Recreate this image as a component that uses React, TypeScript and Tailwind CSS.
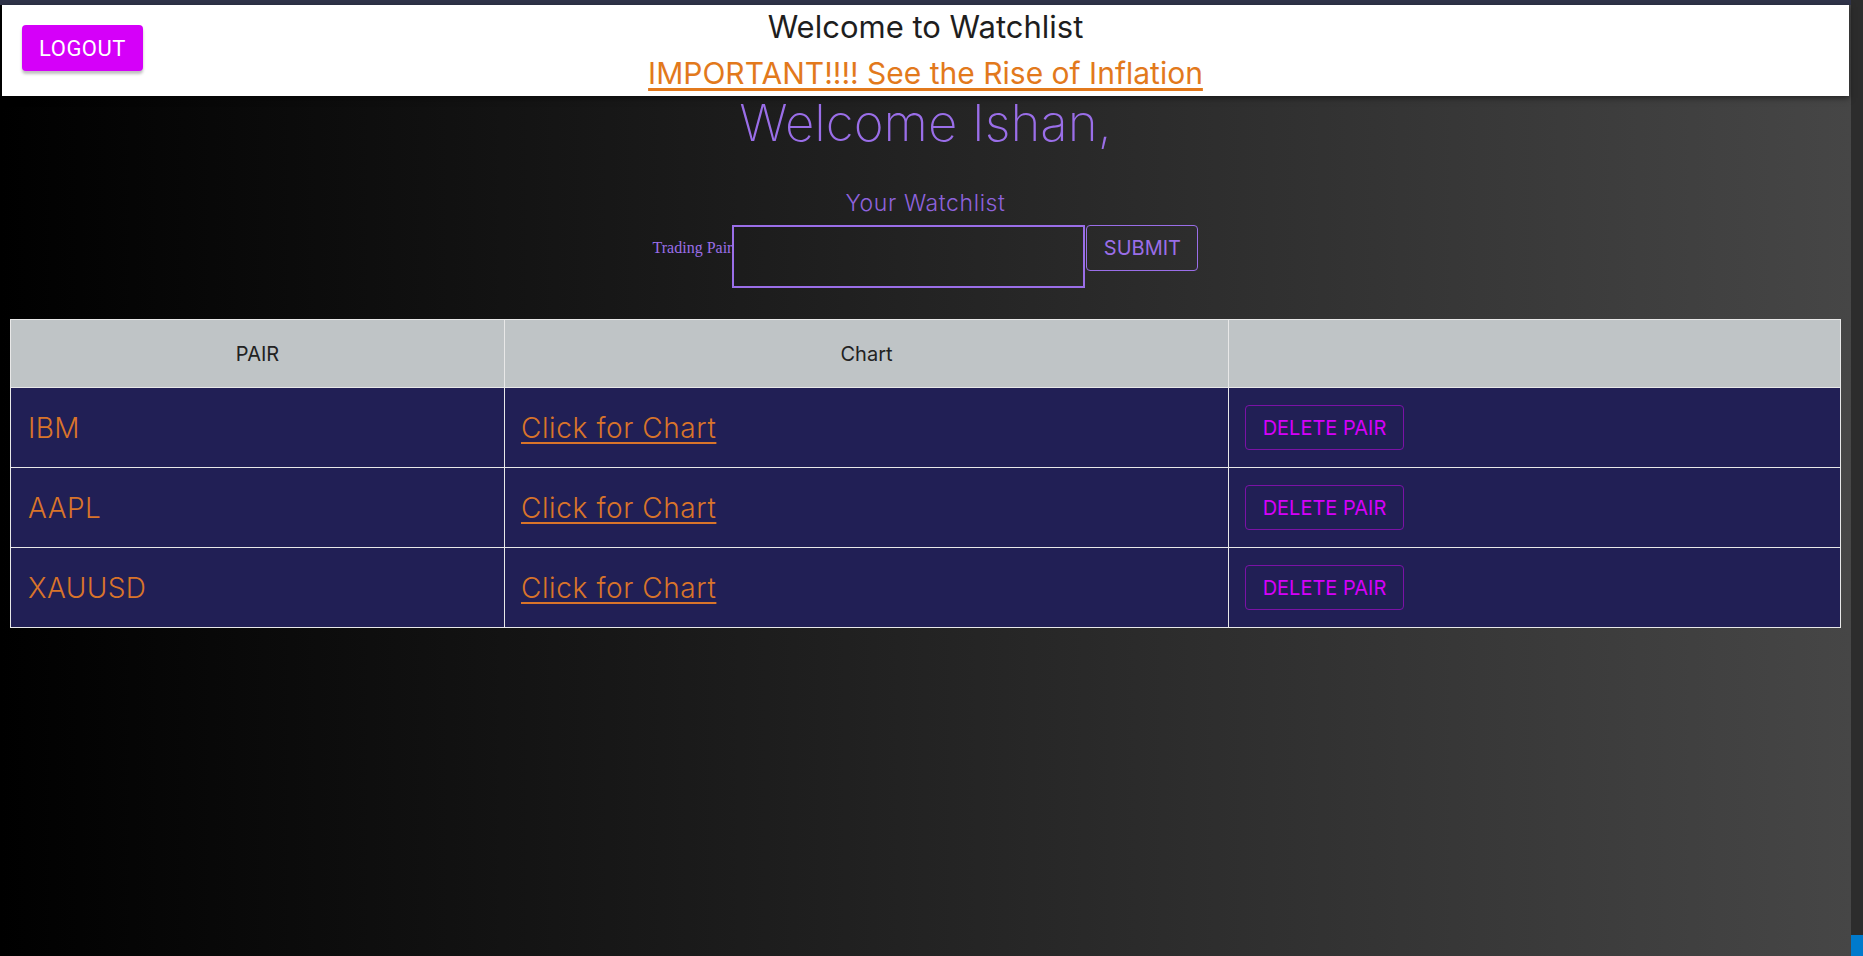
import React from 'react';

const pairs = ['IBM', 'AAPL', 'XAUUSD'];

const sans = "font-['Inter','Lato',sans-serif]";

const Header = () => (
  <header className="relative mx-[2px] h-[91px] bg-white shadow-[0_2px_6px_rgba(0,0,0,0.5)]">
    <button className="absolute left-[20px] top-[20px] h-[46px] w-[121px] rounded-[4px] bg-[#d500f9] font-['Roboto',sans-serif] text-[22px] tracking-[0.5px] text-white shadow-[0_3px_3px_rgba(0,0,0,0.25)]">
      LOGOUT
    </button>
    <div className={`flex flex-col items-center ${sans}`}>
      <h2 className="mt-[4px] text-[31px] leading-[36px] text-[#1e1e1e]">Welcome to Watchlist</h2>
      <a href="#" className="mt-[10px] text-[30px] leading-[36px] text-[#e2791c] underline underline-offset-[4px]">
        IMPORTANT!!!! See the Rise of Inflation
      </a>
    </div>
  </header>
);

const Watchlist = () => (
  <div className={`flex flex-col items-center ${sans}`}>
    <h1 className="mt-[-2px] text-[51px] leading-[58px] font-extralight text-[#9a6ee8]">Welcome Ishan,</h1>
    <h3 className="mt-[37px] text-[23px] leading-[28px] font-light tracking-[0.6px] text-[#8e62dc]">Your Watchlist</h3>
    <form className="mt-[8px] flex items-start" onSubmit={(e) => e.preventDefault()}>
      <label className="mt-[11px] font-['Liberation_Serif',serif] text-[16px] text-[#9a6ee8]">Trading Pair</label>
      <input className="h-[63px] w-[353px] border-2 border-[#9a6ee8] bg-transparent text-white outline-none" />
      <button className="ml-[1px] h-[46px] w-[112px] rounded-[4px] border border-[#9a6ee8] text-[20px] text-[#9a6ee8]">
        SUBMIT
      </button>
    </form>
  </div>
);

const Table = () => (
  <table className={`mx-[10px] mt-[31px] w-[1831px] border-collapse ${sans}`}>
    <thead>
      <tr className="h-[68px] bg-[#bfc4c6] text-[20px] text-[#222]">
        <th className="w-[494px] border border-[#e8e8e8] font-normal">PAIR</th>
        <th className="w-[724px] border border-[#e8e8e8] font-normal">Chart</th>
        <th className="border border-[#e8e8e8]"></th>
      </tr>
    </thead>
    <tbody>
      {pairs.map((p) => (
        <tr key={p} className="h-[80px] bg-[#211f55]">
          <td className="border border-[#e8e8e8] px-[17px] text-[28px] font-light tracking-[0.4px] text-[#d9742a]">{p}</td>
          <td className="border border-[#e8e8e8] px-[16px]">
            <a href="#" className="text-[28px] font-light tracking-[0.6px] text-[#d9742a] underline underline-offset-[4px]">
              Click for Chart
            </a>
          </td>
          <td className="border border-[#e8e8e8] px-[16px]">
            <button className="h-[45px] w-[159px] rounded-[4px] border border-[#7b12a6] text-[20px] text-[#d500f9]">
              DELETE PAIR
            </button>
          </td>
        </tr>
      ))}
    </tbody>
  </table>
);

export default function App() {
  return (
    <div className="flex h-[956px] w-full overflow-hidden">
      <div className="flex flex-1 flex-col bg-[linear-gradient(to_right,#000,#464646)]">
        <div className="h-[5px] bg-[#30344a]" />
        <Header />
        <Watchlist />
        <Table />
      </div>
      <div className="flex w-[13px] flex-col justify-end bg-[#2c2c2c]">
        <div className="h-[21px] bg-[#007acc]" />
      </div>
    </div>
  );
}
